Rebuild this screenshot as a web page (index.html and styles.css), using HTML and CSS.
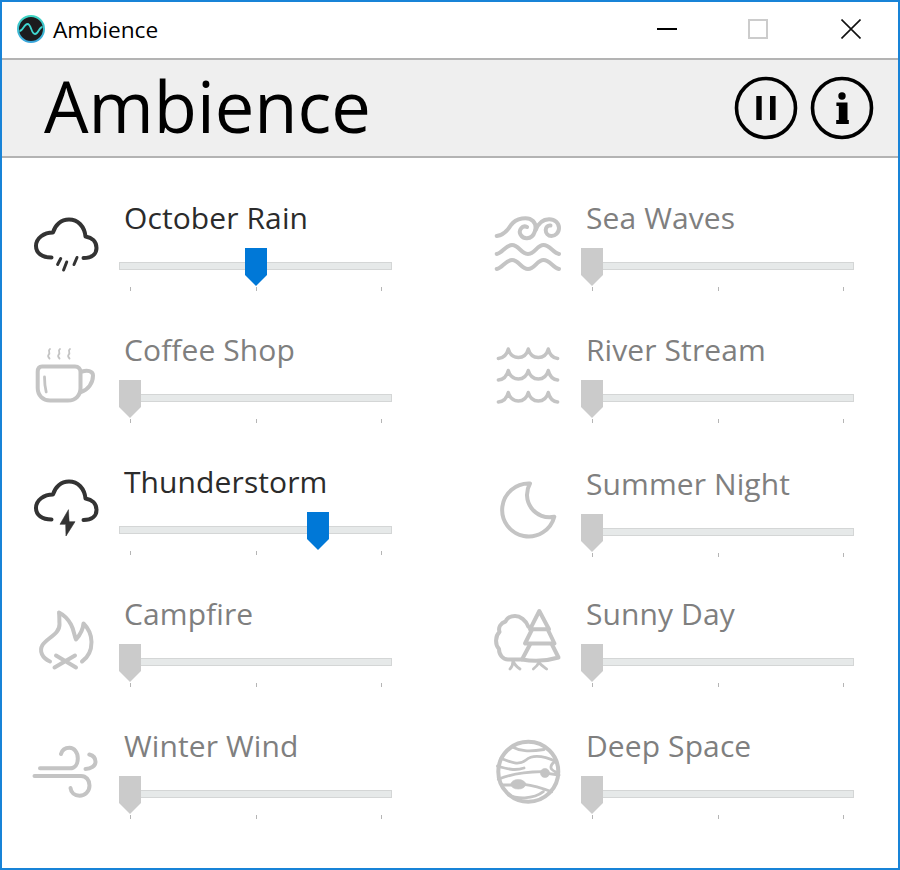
FILE: index.html
```html
<!DOCTYPE html>
<html lang="en">
<head>
<meta charset="utf-8">
<title>Ambience</title>
<link rel="stylesheet" href="styles.css">
</head>
<body>
<div class="window">
  <header class="titlebar">
    <svg class="app-logo" viewBox="0 0 30 30" width="30" height="30">
      <defs><linearGradient id="ring" x1="0" y1="0" x2="0" y2="1"><stop offset="0" stop-color="#3fd6c4"/><stop offset="1" stop-color="#3aa6dc"/></linearGradient></defs>
      <circle cx="15" cy="15" r="13" fill="#1c1c1e" stroke="url(#ring)" stroke-width="2"/>
      <path d="M3.5 17 C7 17 8 10 11.5 10 C15.5 10 15 20 19 20 C22.5 20 23 13 26.5 13" fill="none" stroke="#3fd6d0" stroke-width="1.8"/>
    </svg>
    <span class="app-name">Ambience</span>
    <div class="window-controls">
      <button class="win-btn" aria-label="Minimize"><svg viewBox="0 0 20 20" width="20" height="20"><path d="M0 10H20" stroke="#000" stroke-width="2"/></svg></button>
      <button class="win-btn" aria-label="Maximize"><svg viewBox="0 0 20 20" width="20" height="20"><rect x="1" y="1" width="18" height="18" fill="none" stroke="#ccc" stroke-width="2"/></svg></button>
      <button class="win-btn close" aria-label="Close"><svg viewBox="0 0 20 20" width="20" height="20"><path d="M.5 .5L19.5 19.5M19.5 .5L.5 19.5" stroke="#111" stroke-width="1.6"/></svg></button>
    </div>
  </header>

  <section class="hero">
    <h1 class="hero-title">Ambience</h1>
    <div class="hero-actions">
      <button class="round-btn" aria-label="Pause"><svg viewBox="0 0 64 64" width="64" height="64"><circle cx="32" cy="32" r="29.5" fill="none" stroke="#000" stroke-width="3.6"/><path d="M22.3 20h5.4v24h-5.4zM36 20h5.6v24H36z"/></svg></button>
      <button class="round-btn" aria-label="About"><svg viewBox="0 0 64 64" width="64" height="64"><circle cx="32" cy="32" r="29.5" fill="none" stroke="#000" stroke-width="3.6"/><circle cx="32" cy="20" r="3.7"/><path d="M26.4 26.5H37.5V44H38.8V48H26.2V44H28.8V30H26.4z"/></svg></button>
    </div>
  </section>

  <main class="tiles">
    <div class="tile on">
      <svg class="icon" viewBox="0 0 70 70"><path d="M21.5 47.5C12 47.5 6 43 6 36C6 28 14 22.5 23 22.5C25 15 31 9.5 39 9.5C48 9.5 54.5 16.5 55.5 26.5C62 27.5 66.5 31.5 66.5 38C66.5 44 62 48 53.5 48"/><path class="drop" d="M30.7 48.5L27.6 54.5M36.7 52L33.6 60M47 47.5L44 54.5"/></svg>
      <div class="control"><div class="label">October Rain</div><div class="slider"><div class="track"></div><div class="tick t1"></div><div class="tick t2"></div><div class="tick t3"></div><div class="thumb" style="--v:.502"></div></div></div>
    </div>
    <div class="tile">
      <svg class="icon" viewBox="0 0 70 70"><path d="M4.7 26C12 25 16 20 19 15C24 8 36 6 41 11C46 16 43 28 35 28.3C29 28.5 26 22 29 18.5C30.5 16.5 33 16 35 17"/><path d="M43.7 20C46 14 50 9.5 57 9.3C63 9.2 67 13 67 18C67 23 63 26 59.5 26C56 26 53.7 23 53.7 20C53.7 17 56 15 58.5 15.5"/><path d="M4.7 44C10 43 14 35 20 35C27 35 29 44 36 44C43 44 45 35 51.5 35C58 35 61 43 67 44"/><path d="M4.7 59C10 58 14 50 20 50C27 50 29 59 36 59C43 59 45 50 51.5 50C58 50 61 58 67 59"/></svg>
      <div class="control"><div class="label">Sea Waves</div><div class="slider"><div class="track"></div><div class="tick t1"></div><div class="tick t2"></div><div class="tick t3"></div><div class="thumb" style="--v:0"></div></div></div>
    </div>

    <div class="tile">
      <svg class="icon" viewBox="0 0 70 70"><path d="M12 24.5H45C48.5 24.5 50.5 27 50.5 30V46C50.5 53.5 45.5 58.5 38 58.5H20C13 58.5 7.7 53.5 7.7 46V30C7.7 27 9 24.5 12 24.5Z"/><path d="M52 29.5C57 28 63 28.5 63 33.5C63 41 58 48 51 50"/><path class="thin" d="M14.5 35C14.5 40 15 45 16.2 50"/><path class="steam" d="M20 7C17 9 21 10.5 18.7 12.5C17.5 14 18.5 15.5 19.5 16.5M30 7C27 9 31 10.5 28.7 12.5C27.5 14 28.5 15.5 29.5 16.5M40 7C37 9 41 10.5 38.7 12.5C37.5 14 38.5 15.5 39.5 16.5"/></svg>
      <div class="control"><div class="label">Coffee Shop</div><div class="slider"><div class="track"></div><div class="tick t1"></div><div class="tick t2"></div><div class="tick t3"></div><div class="thumb" style="--v:0"></div></div></div>
    </div>
    <div class="tile">
      <svg class="icon" viewBox="0 0 70 70"><path class="wave" d="M6.3 16.5Q14 16 16.3 7Q18.5 15.5 26.3 15.5Q34 15.5 36.3 7Q38.6 15.5 46.3 15.5Q54 15.5 56.3 7Q58.5 16 65.7 16.5"/><path class="wave" d="M6.3 38Q14 37.5 16.3 28.5Q18.5 37 26.3 37Q34 37 36.3 28.5Q38.6 37 46.3 37Q54 37 56.3 28.5Q58.5 37.5 65.7 38"/><path class="wave" d="M6.3 60Q14 59.5 16.3 50.5Q18.5 59 26.3 59Q34 59 36.3 50.5Q38.6 59 46.3 59Q54 59 56.3 50.5Q58.5 59.5 65.7 60"/></svg>
      <div class="control"><div class="label">River Stream</div><div class="slider"><div class="track"></div><div class="tick t1"></div><div class="tick t2"></div><div class="tick t3"></div><div class="thumb" style="--v:0"></div></div></div>
    </div>

    <div class="tile on">
      <svg class="icon" viewBox="0 2 70 70"><path d="M21.5 47.5C12 47.5 6 43 6 36C6 28 14 22.5 23 22.5C25 15 31 9.5 39 9.5C48 9.5 54.5 16.5 55.5 26.5C62 27.5 66.5 31.5 66.5 38C66.5 44 62 48 53.5 48"/><path class="solid" d="M38.3 38L30 52.3H35.7L36 64L45 49.7H39.3Z"/></svg>
      <div class="control"><div class="label">Thunderstorm</div><div class="slider"><div class="track"></div><div class="tick t1"></div><div class="tick t2"></div><div class="tick t3"></div><div class="thumb" style="--v:.749"></div></div></div>
    </div>
    <div class="tile low">
      <svg class="icon" viewBox="0 0 70 70"><path d="M38 7.5A26.5 26.5 0 1 0 62.3 40.7A22.5 22.5 0 0 1 38 7.5Z"/></svg>
      <div class="control"><div class="label">Summer Night</div><div class="slider"><div class="track"></div><div class="tick t1"></div><div class="tick t2"></div><div class="tick t3"></div><div class="thumb" style="--v:0"></div></div></div>
    </div>

    <div class="tile">
      <svg class="icon" viewBox="0 0 70 70"><path d="M20 55.5C12 52 9 45 12.5 39C17 32 30 28 29.5 18C29.2 13 29.5 9 29 6.5C34 9 38 13 41 18.5C44 24 44 29 46 33.5C49 30 53 24 53.5 17.5C58 22 61.5 29 61.5 36C61.5 45 57 52 52 55.5"/><path d="M24.5 61.5L45 49.5M26 49.5L46 61.5"/></svg>
      <div class="control"><div class="label">Campfire</div><div class="slider"><div class="track"></div><div class="tick t1"></div><div class="tick t2"></div><div class="tick t3"></div><div class="thumb" style="--v:0"></div></div></div>
    </div>
    <div class="tile">
      <svg class="icon" viewBox="0 0 70 70"><path d="M47.3 5L57 23.3H38Z"/><path d="M40 23.5L33 37.5H62.5L56 24"/><path d="M38 38.5L30 53.5Q48 57 66.5 51.5L60 38.5"/><path d="M36.3 20.7C34 14 28 10 23 10C18 10 15 12 13.5 15.5C8.5 17 6 21.5 7.5 26C3 30 3 39 7 43C7 49 11 53.5 16 53.5H30"/><path class="thin" d="M18 63C20 61 21 58 21 54.5C22 58 25 61 28 63M41.3 63C44 61 46 59 47 56C48.5 59 52 61 54.7 63"/></svg>
      <div class="control"><div class="label">Sunny Day</div><div class="slider"><div class="track"></div><div class="tick t1"></div><div class="tick t2"></div><div class="tick t3"></div><div class="thumb" style="--v:0"></div></div></div>
    </div>

    <div class="tile">
      <svg class="icon" viewBox="0 0 70 70"><path d="M10 30.3H40C45 30.3 47.8 26 47.8 20.5C47.8 14 44 9.7 39.5 9.7C35 9.7 32 12 31 16"/><path d="M4.5 38H51C56 38 59.5 42 59.5 47.5C59.5 53.5 55 57.7 49.5 57.7C44.5 57.7 41 54.5 40.5 50"/><path d="M59.3 16.5C63 17.5 65.5 20 65.5 23.7C65.5 28 61 31 55.5 31"/></svg>
      <div class="control"><div class="label">Winter Wind</div><div class="slider"><div class="track"></div><div class="tick t1"></div><div class="tick t2"></div><div class="tick t3"></div><div class="thumb" style="--v:0"></div></div></div>
    </div>
    <div class="tile">
      <svg class="icon" viewBox="0 0 70 70"><circle cx="36.3" cy="33.7" r="30"/><path class="thin2" d="M19.7 8.7C28 13 36 14 52 11.5M8.9 20.3C18 24 27 28 34 22C41 16 52 18 64.7 23.7M5.5 28C15 31 23 33 32 30M6.3 41.3C14 38 30 34 50 33.7M55 35.3L67 37M64.7 23.7C59 24 58 30 60 31.5C62 34 66 34 67 37M9.7 47H20M32 46.3C38 47 50 50 59.7 53.7M16.3 57C24 60.5 41 62 51.3 53.7"/><ellipse class="solid" cx="26.3" cy="46.3" rx="7.5" ry="4.8"/><circle class="solid" cx="53" cy="35" r="4.6"/></svg>
      <div class="control"><div class="label">Deep Space</div><div class="slider"><div class="track"></div><div class="tick t1"></div><div class="tick t2"></div><div class="tick t3"></div><div class="thumb" style="--v:0"></div></div></div>
    </div>
  </main>
</div>
</body>
</html>
```
FILE: styles.css
```css
* { box-sizing: border-box; }
html, body { margin: 0; padding: 0; }
body { background: #fff; font-family: "Open Sans", "Noto Sans", sans-serif; }
button { border: 0; padding: 0; background: none; display: block; }

.window {
  width: 900px;
  height: 870px;
  border: 2px solid #1883d7;
  background: #fff;
  overflow: hidden;
}

.titlebar {
  height: 56px;
  display: flex;
  align-items: center;
  padding: 0 0 2px 14px;
}
.app-logo { display: block; }
.app-name {
  margin-left: 7px;
  font-size: 22.7px;
  color: #000;
}
.window-controls {
  margin-left: auto;
  display: flex;
  gap: 71px;
  padding-right: 37px;
}
.win-btn svg { display: block; }
.win-btn.close { margin-left: 2px; }

.hero {
  height: 100px;
  background: #efefef;
  border-top: 2px solid #b3b3b3;
  border-bottom: 2px solid #b3b3b3;
  display: flex;
  align-items: center;
  padding: 0 24px 0 42px;
}
.hero-title {
  margin: 0;
  font-size: 70.5px;
  font-weight: 400;
  line-height: 92px;
  padding-bottom: 4px;
  color: #000;
}
.hero-actions { margin-left: auto; display: flex; gap: 12px; }
.round-btn svg { display: block; }

.tiles {
  display: grid;
  grid-template-columns: 462px 362px;
  grid-auto-rows: 132px;
  padding: 42px 0 0 28px;
}
.tile { display: flex; align-items: flex-start; gap: 19px; color: #7f7f7f; }
.tile.low { padding-top: 2px; }
.tile.on { color: #2b2b2b; }

.icon {
  width: 70px;
  height: 70px;
  margin-top: 10px;
  flex: none;
  fill: none;
  stroke: #c4c4c4;
  stroke-width: 4;
  stroke-linecap: round;
  stroke-linejoin: round;
}
.tile.on .icon { stroke: #333; }
.icon .thin { stroke-width: 2.8; }
.icon .drop { stroke-width: 3; }
.icon .thin2 { stroke-width: 2.8; }
.icon .steam { stroke-width: 1.8; }
.icon .wave { stroke-width: 3.4; }
.icon .solid { fill: #c4c4c4; stroke-width: .6; }
.tile.on .icon .solid { fill: #333; }

.control { width: 273px; }
.label {
  height: 38px;
  padding-left: 5px;
  font-size: 30px;
  line-height: 36px;
  letter-spacing: .1px;
  white-space: nowrap;
}
.slider { position: relative; height: 43px; margin-top: 10px; }
.track {
  position: absolute;
  left: 0; right: 0; top: 14px;
  height: 8px;
  background: #e6e9e9;
  border: 1px solid #d4d6d6;
}
.thumb {
  position: absolute;
  top: 0;
  left: calc(var(--v) * 251px);
  width: 22px;
  height: 38px;
  background: #cbcbcb;
  clip-path: polygon(0 0, 100% 0, 100% 71%, 50% 100%, 0 71%);
}
.tile.on .thumb { background: #0078d7; }
.tick {
  position: absolute;
  top: 39px;
  width: 1px;
  height: 4px;
  background: #b5b5b5;
}
.t1 { left: 11px; }
.t2 { left: 137px; }
.t3 { left: 262px; }
```
